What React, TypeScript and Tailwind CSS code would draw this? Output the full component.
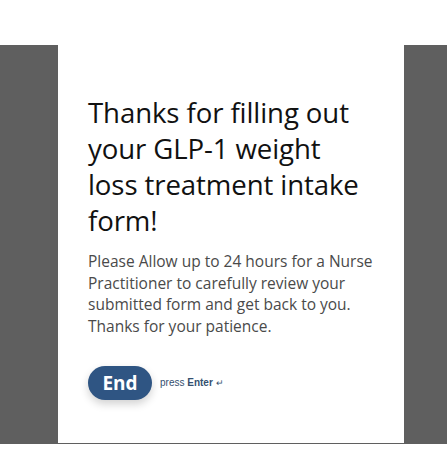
export default function App() {
  return (
    <div className="w-[447px] h-[461px] bg-white pt-[45px]" style={{ fontFamily: '"Open Sans", "Noto Sans", sans-serif' }}>
      <div className="h-[399px] bg-[#5f5f5f] pl-[58px]">
        <div className="w-[346px] h-[398px] bg-white pl-[30px] pr-[16px] pt-[49px]">
          <h1 className="text-[27.6px] leading-[36px] text-[#111] tracking-[-0.1px]">
            Thanks for filling out<br />
            your GLP-1 weight<br />
            loss treatment intake<br />
            form!
          </h1>
          <p className="mt-[13px] text-[15.5px] leading-[21.7px] text-[#4a4a4a]">
            Please Allow up to 24 hours for a Nurse Practitioner to carefully review your submitted form and get back to you. Thanks for your patience.
          </p>
          <div className="mt-[28px] flex items-center gap-[8px]">
            <button className="w-[64px] h-[34px] rounded-full bg-[#2f5583] text-white text-[19px] font-bold shadow-[0_4px_8px_rgba(0,0,0,0.18)]">
              End
            </button>
            <span className="text-[10px] text-[#34506f]" style={{ fontFamily: '"Liberation Sans", Arial, sans-serif' }}>
              press <span className="font-bold">Enter</span> <span className="text-[9px]">↵</span>
            </span>
          </div>
        </div>
      </div>
    </div>
  )
}
